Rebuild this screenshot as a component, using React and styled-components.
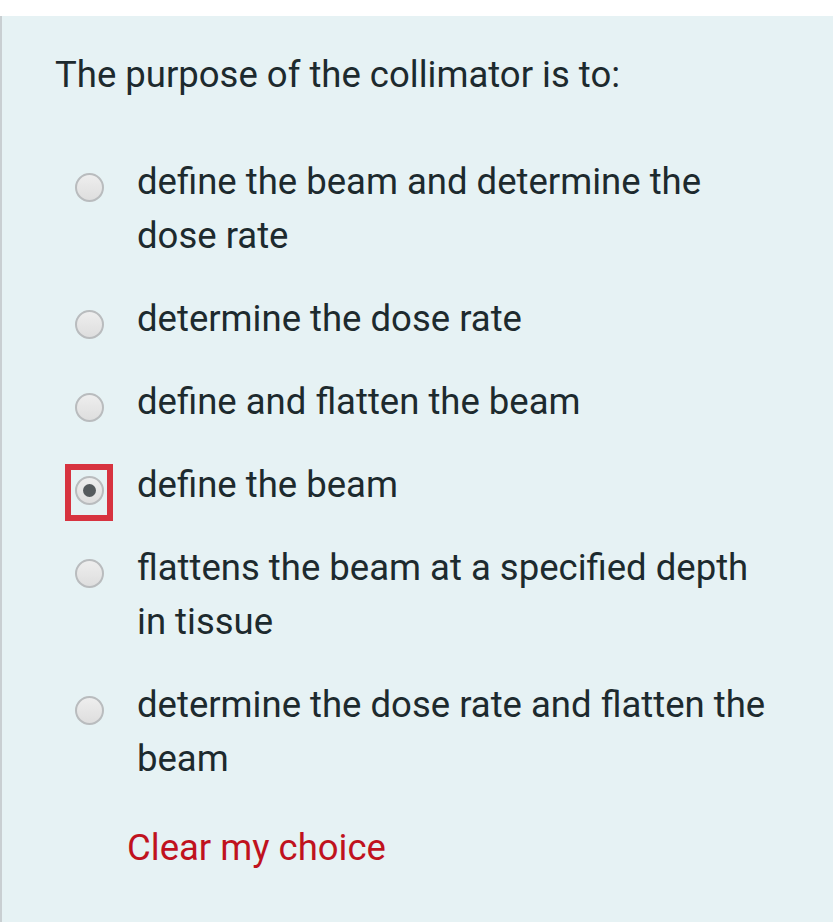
import React from 'react'
import styled, {createGlobalStyle} from 'styled-components'

const Global = createGlobalStyle`
    html, body {
        margin: 0;
        padding: 0;
        background: #ffffff;
    }
    body {
        font-family: Roboto, "Noto Sans", sans-serif;
    }
`

const options = [
    {text: 'define the beam and determine the dose rate'},
    {text: 'determine the dose rate'},
    {text: 'define and flatten the beam'},
    {text: 'define the beam', checked: true},
    {text: 'flattens the beam at a specified depth in tissue'},
    {text: 'determine the dose rate and flatten the beam'},
]

export default function App() {
    return (
        <>
            <Global />
            <Panel>
                <Question>The purpose of the collimator is to:</Question>
                <Answers>
                    {options.map((opt, i) => (
                        <Answer key={i}>
                            <RadioCell>
                                <Radio checked={!!opt.checked} />
                                {opt.checked && <Highlight />}
                            </RadioCell>
                            <Label>{opt.text}</Label>
                        </Answer>
                    ))}
                </Answers>
                <ClearLink>Clear my choice</ClearLink>
            </Panel>
        </>
    )
}

const Panel = styled.div`
    margin-top: 16px;
    min-height: calc(100vh - 16px);
    box-sizing: border-box;
    background: #e6f2f4;
    border-left: 2px solid #c9cfd2;
    padding: 34px 30px 0 53px;
    color: #1d2a2e;
`
const Question = styled.div`
    font-size: 36.5px;
    line-height: 50px;
    white-space: nowrap;
`
const Answers = styled.div`
    margin-top: 55px;
    display: flex;
    flex-direction: column;
    gap: 29px;
`
const Answer = styled.div`
    display: flex;
    align-items: flex-start;
`
const RadioCell = styled.div`
    position: relative;
    width: 82px;
    flex-shrink: 0;
    padding-top: 18px;
    padding-left: 20px;
    box-sizing: border-box;
`
const Radio = styled.span`
    display: flex;
    align-items: center;
    justify-content: center;
    width: 29px;
    height: 29px;
    box-sizing: border-box;
    border-radius: 50%;
    border: 2px solid #b9bcbe;
    background: linear-gradient(#eeeeee, #dedede);
    &::after {
        content: '';
        display: ${props => props.checked ? 'block' : 'none'};
        width: 13px;
        height: 13px;
        border-radius: 50%;
        background: #555a5d;
    }
`
const Highlight = styled.span`
    position: absolute;
    left: 10px;
    top: 6px;
    width: 48px;
    height: 57px;
    box-sizing: border-box;
    border: 6px solid #d7333f;
`
const Label = styled.div`
    font-size: 36.5px;
    line-height: 54px;
    max-width: 645px;
`
const ClearLink = styled.div`
    margin-top: 37px;
    margin-left: 72px;
    font-size: 36.5px;
    line-height: 50px;
    color: #c0121e;
`
